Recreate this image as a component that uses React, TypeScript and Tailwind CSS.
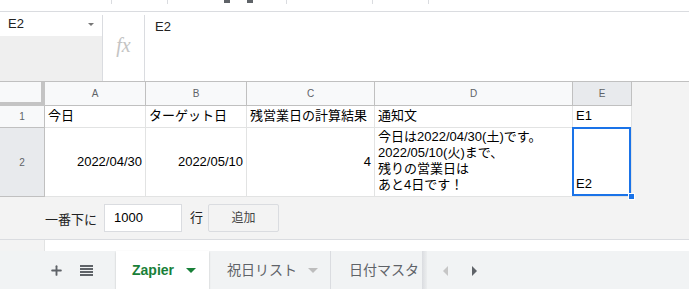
import { Plus } from "lucide-react";

const font = { fontFamily: '"Liberation Sans", Arial, "Noto Sans CJK JP", sans-serif' };

function Toolbar() {
  // 上のツールバーの切れ端
  return (
    <div className="h-[12px] border-b border-[#dadce0] flex">
      <div className="w-[111px]" />
      <div className="w-px h-[4px] bg-[#dadce0]" />
      <div className="w-[55px]" />
      <div className="w-px h-[4px] bg-[#dadce0]" />
      <div className="w-[56px]" />
      <div className="w-[6px] h-[3px] bg-[#5f6368]" />
      <div className="w-[17px]" />
      <div className="w-[6px] h-[3px] bg-[#5f6368]" />
      <div className="w-[33px]" />
      <div className="w-px h-[4px] bg-[#dadce0]" />
      <div className="w-[85px]" />
      <div className="w-px h-[4px] bg-[#dadce0]" />
      <div className="w-[55px]" />
      <div className="w-px h-[4px] bg-[#dadce0]" />
    </div>
  );
}

function FormulaBar() {
  return (
    <div className="flex h-[70px] border-b border-[#c0c0c0]">
      <div className="w-[102px] flex flex-col">
        <div className="h-[24px] bg-white flex items-center justify-between pl-[8px] pr-[8px] text-[13px] text-[#222]">
          <span>E2</span>
          <span className="w-0 h-0 border-l-[3px] border-r-[3px] border-t-[3px] border-l-transparent border-r-transparent border-t-[#777]" />
        </div>
        <div className="flex-1 bg-[#efefef]" />
      </div>
      <div className="w-[42px] border-l border-[#dadce0] mt-[3px] flex items-center justify-center">
        <span
          className="text-[20px] italic text-[#c4c4c4] -mt-[6px]"
          style={{ fontFamily: '"Liberation Serif", serif' }}
        >
          fx
        </span>
      </div>
      <div className="flex-1 border-l border-[#dadce0] mt-[3px] pl-[10px] pt-[2px] text-[13px] text-[#222]">
        E2
      </div>
    </div>
  );
}

const cols = ["A", "B", "C", "D", "E"];

function Grid() {
  const cell = "border-r border-b border-[#e2e3e3] bg-white text-[13px] text-black";
  return (
    <div className="grid grid-cols-[45px_101px_101px_128px_198px_59px_1fr] grid-rows-[24px_22px_69px] bg-[#f3f3f3]">
      {/* 左上 */}
      <div className="bg-[#f8f9fa] border-r-[4px] border-b-[4px] border-[#c4c4c4]" />
      {cols.map((c) => (
        <div
          key={c}
          className={
            "border-r border-b border-[#c0c0c0] flex items-center justify-center text-[10px] text-[#5f6368] " +
            (c === "E" ? "bg-[#e8eaed]" : "bg-[#f8f9fa]")
          }
        >
          {c}
        </div>
      ))}
      <div />

      {/* 行1 */}
      <div className="bg-[#f8f9fa] border-r border-b border-[#c0c0c0] flex items-center justify-center text-[10px] text-[#5f6368]">
        1
      </div>
      <div className={cell + " px-[3px] flex items-end pb-[2px]"}>今日</div>
      <div className={cell + " px-[3px] flex items-end pb-[2px]"}>ターゲット日</div>
      <div className={cell + " px-[3px] flex items-end pb-[2px] overflow-hidden whitespace-nowrap"}>残営業日の計算結果</div>
      <div className={cell + " px-[3px] flex items-end pb-[2px]"}>通知文</div>
      <div className={cell + " px-[3px] flex items-end pb-[2px]"}>E1</div>
      <div />

      {/* 行2 */}
      <div className="bg-[#e8eaed] border-r border-b border-[#c0c0c0] flex items-center justify-center text-[10px] text-[#5f6368]">
        2
      </div>
      <div className={cell + " px-[3px] flex items-center justify-end"}>2022/04/30</div>
      <div className={cell + " px-[3px] flex items-center justify-end"}>2022/05/10</div>
      <div className={cell + " px-[3px] flex items-center justify-end"}>4</div>
      <div className={cell + " px-[3px] pt-[1px] leading-[16px]"}>
        <div>今日は2022/04/30(土)です。</div>
        <div>2022/05/10(火)まで、</div>
        <div>残りの営業日は</div>
        <div>あと4日です！</div>
      </div>
      <div className={cell + " relative"}>
        <div className="absolute -left-px -top-px -right-0 -bottom-0 border-2 border-[#1a73e8] flex items-end px-[2px] pb-[1px]">
          E2
        </div>
        <div className="absolute -right-[4px] -bottom-[4px] w-[7px] h-[7px] bg-[#1a73e8] border border-white" />
      </div>
      <div />
    </div>
  );
}

function AddRows() {
  return (
    <div className="bg-[#f3f3f3] h-[43px] flex items-center text-[13px] text-[#222] border-b border-[#dadce0]">
      <span className="ml-[45px] mt-[4px]">一番下に</span>
      <div className="ml-[7px] w-[78px] h-[28px] bg-white border border-[#dadce0] flex items-center pl-[9px] text-black">
        1000
      </div>
      <span className="ml-[8px]">行</span>
      <div className="ml-[5px] w-[71px] h-[28px] bg-[#f3f3f3] border border-[#dadce0] rounded-[2px] flex items-center justify-center text-[12px] text-[#444]">
        追加
      </div>
    </div>
  );
}

function Tabs() {
  return (
    <div className="h-[39px] bg-[#f1f3f4] flex items-stretch text-[14px]">
      <div className="w-[116px] flex items-center">
        <Plus className="ml-[49px] w-[15px] h-[15px] text-[#5f6368]" strokeWidth={3} />
        <svg className="ml-[16px]" width="13" height="11" viewBox="0 0 13 11">
          <rect x="0" y="0" width="13" height="2" fill="#5f6368" />
          <rect x="0" y="3" width="13" height="2" fill="#5f6368" />
          <rect x="0" y="6" width="13" height="2" fill="#5f6368" />
          <rect x="0" y="9" width="13" height="2" fill="#5f6368" />
        </svg>
      </div>
      <div className="w-[93px] bg-white flex items-center pl-[16px] shadow-[0_1px_2px_rgba(0,0,0,0.2)]">
        <span className="font-bold text-[#188038]">Zapier</span>
        <span className="ml-[12px] w-0 h-0 border-l-[5px] border-r-[5px] border-t-[5px] border-l-transparent border-r-transparent border-t-[#188038]" />
      </div>
      <div className="w-[122px] flex items-center pl-[18px] border-r border-[#dadce0] text-[#5f6368]">
        <span>祝日リスト</span>
        <span className="ml-[11px] w-0 h-0 border-l-[5px] border-r-[5px] border-t-[5px] border-l-transparent border-r-transparent border-t-[#bdbdbd]" />
      </div>
      <div className="w-[91px] flex items-center pl-[18px] overflow-hidden whitespace-nowrap text-[#5f6368]">
        <span>日付マスタ</span>
      </div>
      <div className="w-[5px] bg-gradient-to-r from-[#dadce0] to-[#eceeef]" />
      <div className="flex items-center">
        <span className="ml-[16px] w-0 h-0 border-t-[5px] border-b-[5px] border-r-[5px] border-t-transparent border-b-transparent border-r-[#c6c6c6]" />
        <span className="ml-[24px] w-0 h-0 border-t-[5px] border-b-[5px] border-l-[5px] border-t-transparent border-b-transparent border-l-[#5f6368]" />
      </div>
    </div>
  );
}

export default function App() {
  return (
    <div className="w-[689px] h-[289px] bg-white overflow-hidden" style={font}>
      <Toolbar />
      <FormulaBar />
      <Grid />
      <AddRows />
      <div className="h-[11px] flex">
        <div className="w-[45px] bg-[#f3f3f3] border-r border-[#e2e3e3]" />
        <div className="flex-1 bg-white" />
      </div>
      <Tabs />
    </div>
  );
}
